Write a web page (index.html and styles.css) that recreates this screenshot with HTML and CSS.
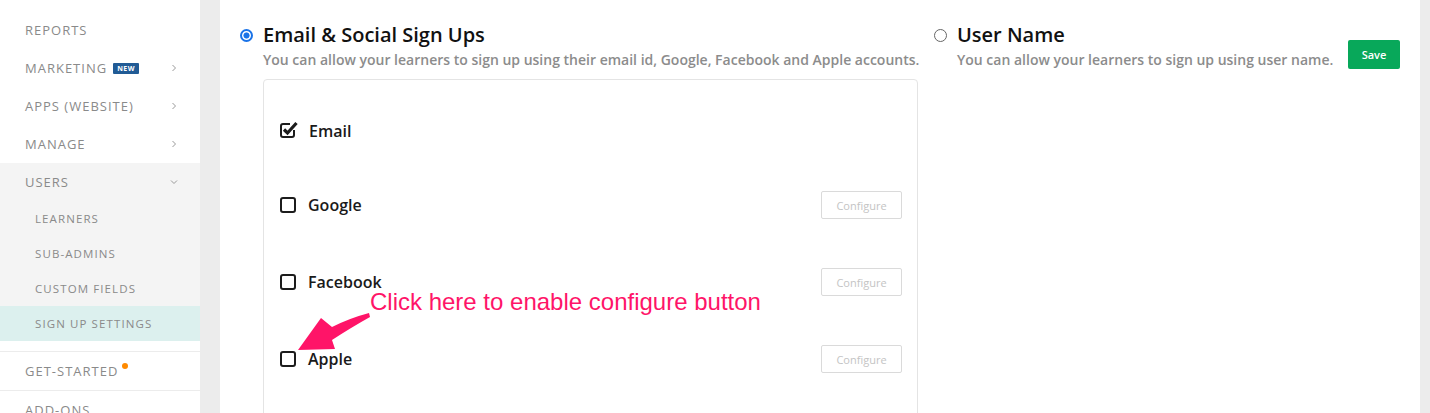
FILE: index.html
```html
<!DOCTYPE html>
<html lang="en">
<head>
    <meta charset="UTF-8">
    <title>Sign Up Settings</title>
    <link rel="stylesheet" href="styles.css">
</head>
<body>

<aside class="sidebar">
    <div class="nav-item">REPORTS</div>
    <div class="nav-item">MARKETING <span class="badge">NEW</span>
        <svg class="chevron" width="8" height="8" viewBox="0 0 8 8"><polyline points="2.5,1 5.5,4 2.5,7"/></svg>
    </div>
    <div class="nav-item">APPS (WEBSITE)
        <svg class="chevron" width="8" height="8" viewBox="0 0 8 8"><polyline points="2.5,1 5.5,4 2.5,7"/></svg>
    </div>
    <div class="nav-item">MANAGE
        <svg class="chevron" width="8" height="8" viewBox="0 0 8 8"><polyline points="2.5,1 5.5,4 2.5,7"/></svg>
    </div>
    <div class="nav-group">
        <div class="nav-item">USERS
            <svg class="chevron" width="8" height="8" viewBox="0 0 8 8"><polyline points="1,2.5 4,5.5 7,2.5"/></svg>
        </div>
        <div class="sub-item">LEARNERS</div>
        <div class="sub-item">SUB-ADMINS</div>
        <div class="sub-item">CUSTOM FIELDS</div>
        <div class="sub-item active">SIGN UP SETTINGS</div>
    </div>
    <div class="nav-item bordered">GET-STARTED <span class="dot"></span></div>
    <div class="nav-item bordered">ADD-ONS</div>
</aside>

<main class="panel">
    <section class="option option-social">
        <span class="radio checked"></span>
        <div class="option-body">
            <h2 class="option-title">Email &amp; Social Sign Ups</h2>
            <p class="option-desc">You can allow your learners to sign up using their email id, Google, Facebook and Apple accounts.</p>
            <div class="card">
                <div class="row row-short">
                    <svg class="check" width="19" height="18" viewBox="0 0 19 18">
                        <path class="box" d="M14 9v5a2 2 0 0 1-2 2h-9a2 2 0 0 1-2-2v-9a2 2 0 0 1 2-2h7"/>
                        <path class="tick" d="M4 8.5l3.5 3.5 9-10" />
                    </svg>
                    <span class="row-label">Email</span>
                </div>
                <div class="row">
                    <span class="checkbox"></span>
                    <span class="row-label">Google</span>
                    <button class="configure">Configure</button>
                </div>
                <div class="row">
                    <span class="checkbox"></span>
                    <span class="row-label">Facebook</span>
                    <button class="configure">Configure</button>
                </div>
                <div class="row">
                    <span class="checkbox"></span>
                    <span class="row-label">Apple</span>
                    <button class="configure">Configure</button>
                </div>
            </div>
        </div>
    </section>

    <section class="option option-user">
        <span class="radio"></span>
        <div class="option-body">
            <h2 class="option-title">User Name</h2>
            <p class="option-desc">You can allow your learners to sign up using user name.</p>
        </div>
    </section>

    <button class="save">Save</button>

    <div class="note">Click here to enable configure button</div>
    <svg class="note-arrow" width="90" height="50" viewBox="0 0 90 50">
        <path d="M72 1 Q53 6 35 15 L24 6 L1 38 L38 37 L35 28 Q55 15 73 5 Z"/>
    </svg>
</main>

</body>
</html>
```

FILE: styles.css
```css
* {
    box-sizing: border-box;
}

body {
    margin: 0;
    height: 413px;
    overflow: hidden;
    display: flex;
    background: #ececec;
    font-family: 'Open Sans', sans-serif;
}

/* sidebar */

.sidebar {
    width: 200px;
    flex-shrink: 0;
    background: white;
    padding-top: 11px;
}

.nav-item {
    height: 38px;
    display: flex;
    align-items: center;
    padding-left: 25px;
    padding-right: 22px;
    font-size: 13px;
    letter-spacing: 1px;
    color: #8a8a8a;
}

.chevron {
    margin-left: auto;
    fill: none;
    stroke: #9a9a9a;
    stroke-width: 1;
}

.badge {
    margin-left: 6px;
    background: #215b95;
    color: white;
    font-size: 7px;
    font-weight: 700;
    letter-spacing: 0.5px;
    line-height: 11px;
    padding: 0 4px;
    border-radius: 1px;
}

.nav-group {
    background: #f4f4f4;
    margin-bottom: 10px;
}

.sub-item {
    height: 35px;
    display: flex;
    align-items: center;
    padding-left: 35px;
    font-size: 11.5px;
    letter-spacing: 1.1px;
    color: #8a8a8a;
}

.sub-item.active {
    background: #dcf0ee;
}

.bordered {
    border-top: 1px solid #ececec;
    height: 39px;
}

.dot {
    width: 6px;
    height: 6px;
    border-radius: 50%;
    background: #ff8a00;
    margin: -10px 0 0 4px;
}

/* main panel */

.panel {
    position: relative;
    width: 1200px;
    margin-left: 20px;
    flex-shrink: 0;
    background: white;
    display: flex;
    align-items: flex-start;
    padding: 21px 20px 0 20px;
}

.option {
    display: flex;
    align-items: flex-start;
}

.option-social {
    width: 678px;
    flex-shrink: 0;
}

.option-user {
    margin-left: 16px;
}

.radio {
    width: 13px;
    height: 13px;
    border-radius: 50%;
    border: 1px solid #666;
    margin-top: 8px;
    margin-right: 10px;
    flex-shrink: 0;
}

.radio.checked {
    border: 2px solid #1a73e8;
    background: radial-gradient(circle, #1a73e8 0 2.7px, white 3.4px);
}

.option-body {
    flex-grow: 1;
    min-width: 0;
}

.option-title {
    margin: 0;
    font-size: 20px;
    line-height: 28px;
    font-weight: 600;
    color: #111;
}

.option-desc {
    margin: 1px 0 0;
    font-size: 14px;
    line-height: 20px;
    font-weight: 600;
    color: #8c8c8c;
    white-space: nowrap;
}

.card {
    margin-top: 9px;
    width: 655px;
    height: 340px;
    border: 1px solid #e4e4e4;
    border-radius: 4px;
    padding: 40px 15px 0 16px;
    display: flex;
    flex-direction: column;
    gap: 49px;
}

.row {
    height: 28px;
    display: flex;
    align-items: center;
}

.row-short {
    height: 22px;
}

.checkbox {
    width: 16px;
    height: 16px;
    border: 2px solid #1c1c1c;
    border-radius: 3px;
    margin-right: 12px;
}

.check {
    margin-right: 10px;
    margin-top: -3px;
}

.check .box {
    fill: none;
    stroke: #1c1c1c;
    stroke-width: 2;
}

.check .tick {
    fill: none;
    stroke: #1c1c1c;
    stroke-width: 3.2;
}

.row-label {
    font-size: 16px;
    font-weight: 600;
    color: #1a1a1a;
}

.configure {
    margin-left: auto;
    width: 81px;
    height: 28px;
    background: white;
    border: 1px solid #dadada;
    border-radius: 2px;
    font-family: 'Open Sans', sans-serif;
    font-size: 11px;
    color: #c4c4c4;
    padding: 0;
}

.save {
    margin-left: auto;
    margin-top: 19px;
    width: 52px;
    height: 29px;
    background: #08a85a;
    border: none;
    border-radius: 2px;
    color: white;
    font-family: 'Open Sans', sans-serif;
    font-size: 11px;
    font-weight: 600;
    padding: 0;
    flex-shrink: 0;
}

/* annotation overlay */

.note {
    position: absolute;
    left: 150px;
    top: 288px;
    font-family: 'Liberation Sans', Arial, sans-serif;
    font-size: 24px;
    line-height: 28px;
    color: #ff1468;
    white-space: nowrap;
}

.note-arrow {
    position: absolute;
    left: 77px;
    top: 312px;
    fill: #ff1468;
}
```
